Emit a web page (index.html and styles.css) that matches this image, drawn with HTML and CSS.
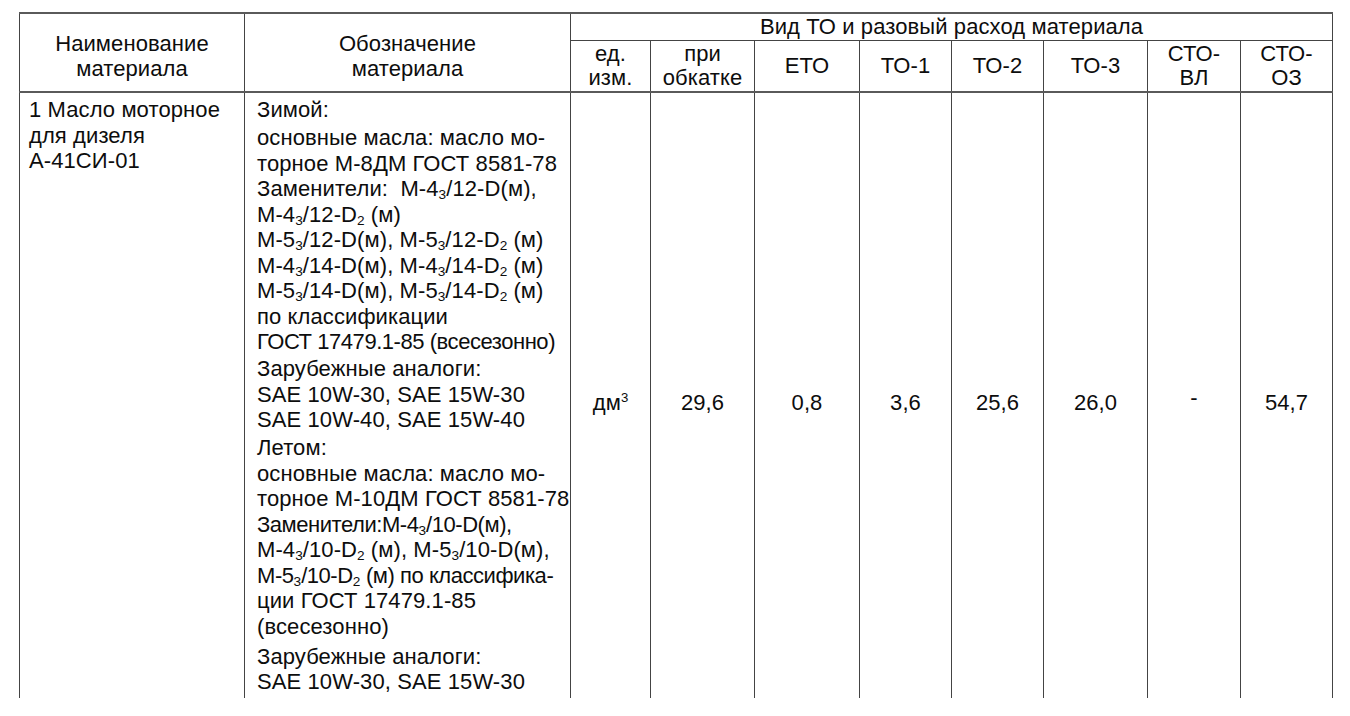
FILE: index.html
```html
<!DOCTYPE html>
<html lang="ru">
<head>
<meta charset="utf-8">
<title>Вид ТО и разовый расход материала</title>
<link rel="stylesheet" href="styles.css">
</head>
<body>
<div class="page">
  <div class="clip">
    <table class="grid">
      <colgroup>
        <col class="c-name">
        <col class="c-desig">
        <col class="c-unit">
        <col class="c-run">
        <col class="c-eto">
        <col class="c-to1">
        <col class="c-to2">
        <col class="c-to3">
        <col class="c-stovl">
        <col class="c-stooz">
      </colgroup>
      <thead>
        <tr class="hrow1">
          <th rowspan="2" class="hmain">Наименование<br>материала</th>
          <th rowspan="2" class="hmain">Обозначение<br>материала</th>
          <th colspan="8" class="hgroup">Вид ТО и разовый расход материала</th>
        </tr>
        <tr class="hrow2">
          <th>ед.<br>изм.</th>
          <th>при<br>обкатке</th>
          <th>ЕТО</th>
          <th>ТО-1</th>
          <th>ТО-2</th>
          <th>ТО-3</th>
          <th>СТО-<br>ВЛ</th>
          <th>СТО-<br>ОЗ</th>
        </tr>
      </thead>
      <tbody>
        <tr class="brow">
          <td class="name">1 Масло моторное<br>для дизеля<br>А-41СИ-01</td>
          <td class="desig">
            <p class="para">Зимой:</p>
            <p class="para gap">основные масла: масло мо-<br>торное М-8ДМ ГОСТ 8581-78<br>Заменители:&nbsp; М-4<sub>3</sub>/12-D(м),<br>М-4<sub>3</sub>/12-D<sub>2</sub> (м)<br>М-5<sub>3</sub>/12-D(м), М-5<sub>3</sub>/12-D<sub>2</sub> (м)<br>М-4<sub>3</sub>/14-D(м), М-4<sub>3</sub>/14-D<sub>2</sub> (м)<br>М-5<sub>3</sub>/14-D(м), М-5<sub>3</sub>/14-D<sub>2</sub> (м)<br>по классификации<br><span class="tight">ГОСТ 17479.1-85 (всесезонно)</span></p>
            <p class="para gap-s">Зарубежные аналоги:<br>SAE 10W-30, SAE 15W-30<br>SAE 10W-40, SAE 15W-40</p>
            <p class="para gap">Летом:</p>
            <p class="para">основные масла: масло мо-<br>торное М-10ДМ ГОСТ 8581-78<br><span class="tight">Заменители:М-4<sub>3</sub>/10-D(м),</span><br>М-4<sub>3</sub>/10-D<sub>2</sub> (м), М-5<sub>3</sub>/10-D(м),<br><span class="tight">М-5<sub>3</sub>/10-D<sub>2</sub> (м) по классифика-</span><br>ции ГОСТ 17479.1-85<br>(всесезонно)</p>
            <p class="para gap-l">Зарубежные аналоги:<br>SAE 10W-30, SAE 15W-30</p>
          </td>
          <td class="val">дм<sup>3</sup></td>
          <td class="val">29,6</td>
          <td class="val">0,8</td>
          <td class="val">3,6</td>
          <td class="val">25,6</td>
          <td class="val">26,0</td>
          <td class="val"><span class="dash">-</span></td>
          <td class="val">54,7</td>
        </tr>
      </tbody>
    </table>
  </div>
</div>
</body>
</html>
```

FILE: styles.css
```css
* {
  box-sizing: border-box;
}

body {
  margin: 0;
  background: #ffffff;
  font-family: "Liberation Sans", Arial, sans-serif;
  color: #0d0d0d;
}

.page {
  padding: 12px 0 0 19px;
}

.clip {
  width: 1315px;
  height: 686px;
  overflow: hidden;
}

.grid {
  border-collapse: collapse;
  table-layout: fixed;
  width: 1313px;
  font-size: 22px;
  letter-spacing: 0.1px;
}

.c-name { width: 225px; }
.c-desig { width: 326px; }
.c-unit { width: 80px; }
.c-run { width: 104px; }
.c-eto { width: 105px; }
.c-to1 { width: 92px; }
.c-to2 { width: 92px; }
.c-to3 { width: 104px; }
.c-stovl { width: 93px; }
.c-stooz { width: 92px; }

.grid th,
.grid td {
  border: 1px solid #444444;
  padding: 0;
}

.grid thead th {
  font-weight: normal;
  text-align: center;
  vertical-align: middle;
  line-height: 24px;
}

.grid .hrow1 th {
  border-top: 2px solid #5a5a5a;
}

.hrow1 {
  height: 27px;
}

.hrow2 {
  height: 52px;
}

.grid .hmain {
  line-height: 25px;
  padding-top: 6px;
}

.grid .hgroup {
  padding-top: 0;
  line-height: 24px;
}

.grid tbody td {
  border-top: 2px solid #5a5a5a;
  border-bottom: none;
}

.brow {
  height: 620px;
}

.grid .name,
.grid .desig {
  vertical-align: top;
  white-space: nowrap;
  line-height: 25.5px;
  padding-top: 4px;
}

.grid .name {
  padding-left: 9px;
}

.grid .desig {
  padding-left: 12px;
}

.para {
  margin: 0;
}

.gap {
  margin-top: 2.5px;
}

.gap-s {
  margin-top: 1.5px;
}

.gap-l {
  margin-top: 4.5px;
}

.tight {
  letter-spacing: -0.45px;
}

.grid sub {
  font-size: 0.62em;
  vertical-align: -0.22em;
  line-height: 0;
  letter-spacing: 0;
}

.grid sup {
  font-size: 0.6em;
  vertical-align: 0.6em;
  line-height: 0;
  letter-spacing: 0;
}

.grid .val {
  text-align: center;
  vertical-align: middle;
}

.dash {
  display: inline-block;
  vertical-align: 0.45em;
}
```
